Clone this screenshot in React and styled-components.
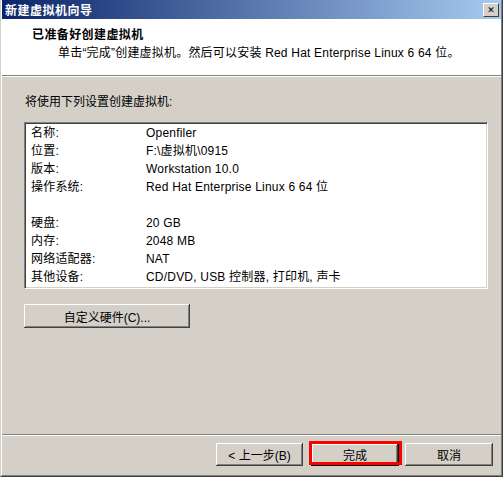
import React from 'react';
import styled, { createGlobalStyle } from 'styled-components';

const GlobalStyle = createGlobalStyle`
  html, body {
    margin: 0;
    padding: 0;
    background: #d4d0c8;
  }
  body {
    font-family: "Liberation Sans", "Noto Sans CJK SC", sans-serif;
    font-size: 12px;
    color: #000;
  }
`;

const settings = [
  { label: '名称:', value: 'Openfiler' },
  { label: '位置:', value: 'F:\\虚拟机\\0915' },
  { label: '版本:', value: 'Workstation 10.0' },
  { label: '操作系统:', value: 'Red Hat Enterprise Linux 6 64 位' },
  { label: '', value: '' },
  { label: '硬盘:', value: '20 GB' },
  { label: '内存:', value: '2048 MB' },
  { label: '网络适配器:', value: 'NAT' },
  { label: '其他设备:', value: 'CD/DVD, USB 控制器, 打印机, 声卡' },
];

const Window = styled.div`
  width: 503px;
  height: 477px;
  box-sizing: border-box;
  background: #d4d0c8;
  border-left: 1px solid #d4d0c8;
  border-right: 1px solid #404040;
  border-bottom: 1px solid #404040;
`;

const Frame = styled.div`
  height: 100%;
  box-sizing: border-box;
  display: flex;
  flex-direction: column;
  border-left: 1px solid #fff;
  border-right: 1px solid #808080;
  border-bottom: 1px solid #808080;
`;

const TitleBar = styled.div`
  height: 19px;
  flex: none;
  box-sizing: border-box;
  display: grid;
  grid-template-columns: 1fr 16px;
  align-items: center;
  padding: 0 2px 0 3px;
  background: linear-gradient(to right, #0a246a, #a6caf0);
`;

const TitleText = styled.span`
  color: #fff;
  font-weight: bold;
  font-size: 12px;
  letter-spacing: 0.5px;
`;

const CloseButton = styled.span`
  display: block;
  width: 16px;
  height: 14px;
  box-sizing: border-box;
  background-color: #d4d0c8;
  border-top: 1px solid #fff;
  border-left: 1px solid #fff;
  border-right: 1px solid #404040;
  border-bottom: 1px solid #404040;
  color: #000;
  font-family: "DejaVu Sans", sans-serif;
  font-weight: bold;
  font-size: 9px;
  line-height: 12px;
  text-align: center;
`;

const Header = styled.div`
  height: 57px;
  flex: none;
  box-sizing: border-box;
  background: #fff;
  padding: 7px 0 0 30px;
  border-bottom: 1px solid #808080;
  margin-bottom: 1px;
  box-shadow: 0 1px #fff;
`;

const HeaderTitle = styled.div`
  font-weight: bold;
  line-height: 18px;
  letter-spacing: 0.4px;
`;

const HeaderSub = styled.div`
  line-height: 18px;
  padding-left: 26px;
  letter-spacing: 0.2px;
`;

const Body = styled.div`
  flex: 1;
  padding: 16px 13px 0 22px;
`;

const Intro = styled.div`
  line-height: 18px;
  margin-left: 1px;
`;

const SettingsBox = styled.div`
  margin-top: 11px;
  height: 167px;
  box-sizing: border-box;
  background: #fff;
  padding: 1px 0 1px 6px;
  border-top: 1px solid #808080;
  border-left: 1px solid #808080;
  border-right: 1px solid #fff;
  border-bottom: 1px solid #fff;
  box-shadow: inset 1px 1px #404040, inset -1px -1px #d4d0c8;
`;

const Row = styled.div`
  display: grid;
  grid-template-columns: 115px 1fr;
  height: 18px;
  line-height: 18px;
  white-space: nowrap;
  letter-spacing: 0.2px;
`;

const Button = styled.button`
  font: inherit;
  color: #000;
  height: 23px;
  width: ${({ $width }) => $width || 88}px;
  padding: 0;
  border: none;
  background: #d4d0c8;
  box-shadow: inset -1px -1px #404040, inset 1px 1px #fff,
    inset -2px -2px #808080, inset 2px 2px #d4d0c8;
  position: relative;
  ${({ $default }) =>
    $default &&
    `box-shadow: inset 0 0 0 1px #000, inset -2px -2px #404040, inset 2px 2px #fff,
      inset -3px -3px #808080;`}
`;

const CustomButton = styled(Button)`
  margin-top: 15px;
  height: 24px;
`;

const Footer = styled.div`
  height: 41px;
  flex: none;
  box-sizing: border-box;
  border-top: 1px solid #808080;
  box-shadow: inset 0 1px #fff;
  display: flex;
  justify-content: flex-end;
  gap: 6px;
  padding: 8px 8px 0 0;
`;

const BackButton = styled(Button)`
  margin-right: 2px;
`;

const Highlight = styled.span`
  position: absolute;
  top: -2px;
  left: -2px;
  width: 93px;
  height: 24px;
  box-sizing: border-box;
  border: 3px solid #f00;
  pointer-events: none;
`;

export default function App() {
  return (
    <>
      <GlobalStyle />
      <Window>
        <Frame>
          <TitleBar>
            <TitleText>新建虚拟机向导</TitleText>
            <CloseButton>✕</CloseButton>
          </TitleBar>
          <Header>
            <HeaderTitle>已准备好创建虚拟机</HeaderTitle>
            <HeaderSub>单击“完成”创建虚拟机。然后可以安装 Red Hat Enterprise Linux 6 64 位。</HeaderSub>
          </Header>
          <Body>
            <Intro>将使用下列设置创建虚拟机:</Intro>
            <SettingsBox>
              {settings.map((s, i) => (
                <Row key={`row-${i}`}>
                  <span>{s.label}</span>
                  <span>{s.value}</span>
                </Row>
              ))}
            </SettingsBox>
            <CustomButton $width={166}>自定义硬件(C)...</CustomButton>
          </Body>
          <Footer>
            <BackButton $width={87}>&lt; 上一步(B)</BackButton>
            <Button $default>
              完成
              <Highlight />
            </Button>
            <Button>取消</Button>
          </Footer>
        </Frame>
      </Window>
    </>
  );
}
